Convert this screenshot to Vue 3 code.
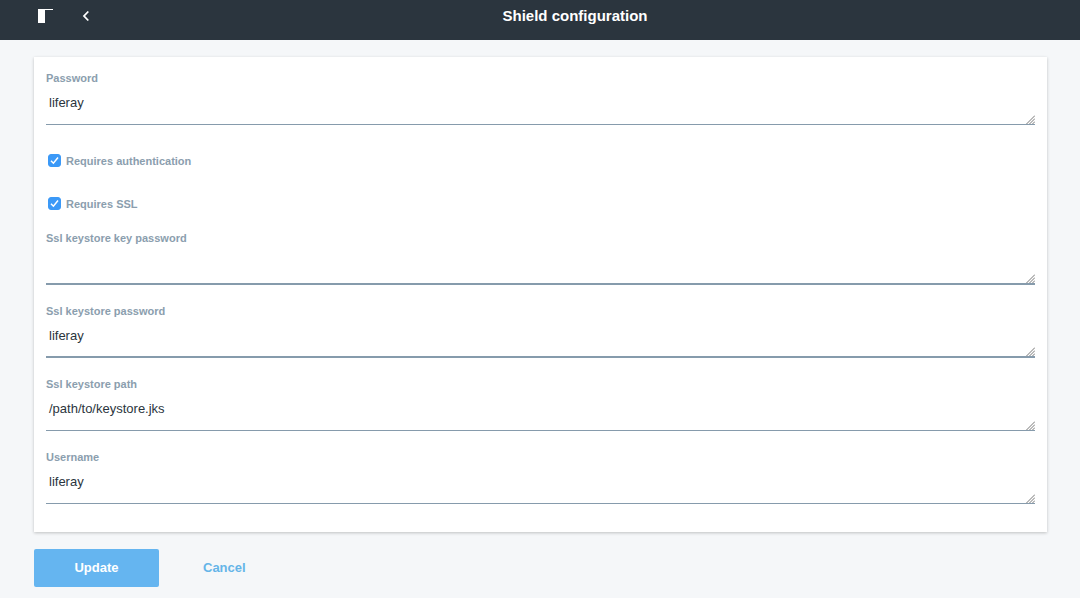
<script setup>
import { reactive } from 'vue'

const fields = reactive([
  { id: 'password', label: 'Password', value: 'liferay', strong: false },
  { id: 'requiresAuth', label: 'Requires authentication', value: true, check: true },
  { id: 'requiresSsl', label: 'Requires SSL', value: true, check: true },
  { id: 'keyPassword', label: 'Ssl keystore key password', value: '', strong: true },
  { id: 'storePassword', label: 'Ssl keystore password', value: 'liferay', strong: true },
  { id: 'storePath', label: 'Ssl keystore path', value: '/path/to/keystore.jks', strong: false },
  { id: 'username', label: 'Username', value: 'liferay', strong: false }
])
</script>

<template>
  <div class="page">
    <header class="bar">
      <div class="tools">
        <button class="tool" type="button" aria-label="Toggle menu">
          <svg width="16" height="16" viewBox="0 0 16 16">
            <rect x="0" y="1" width="7" height="14" fill="#fff" />
            <rect x="7" y="1" width="8" height="1" fill="#fff" />
          </svg>
        </button>
        <a class="tool" href="#" aria-label="Back">
          <svg width="8" height="12" viewBox="0 0 8 12">
            <path d="M6.3 1.5 L2 6 L6.3 10.5" fill="none" stroke="#fff" stroke-width="1.8" />
          </svg>
        </a>
      </div>
      <h1 class="title">Shield configuration</h1>
    </header>

    <form class="form" @submit.prevent>
      <div class="card">
        <template v-for="f in fields" :key="f.id">
          <label v-if="f.check" class="check">
            <span class="tick">
              <input v-model="f.value" type="checkbox" class="box" />
              <svg class="mark" viewBox="0 0 13 13">
                <path d="M3 6.8 L5.4 9.2 L10 3.6" fill="none" stroke="#fff" stroke-width="1.5" />
              </svg>
            </span>
            {{ f.label }}
          </label>
          <div v-else class="field">
            <label class="label" :for="f.id">{{ f.label }}</label>
            <div class="area">
              <textarea :id="f.id" v-model="f.value" class="text" :class="{ strong: f.strong }" rows="1"></textarea>
              <svg class="grip" :class="{ raised: f.strong }" viewBox="0 0 9 9" aria-hidden="true">
                <path d="M0.5 9 L9 0.5 M3.5 9 L9 3.5 M6.5 9 L9 6.5" fill="none" stroke="#666" stroke-width="0.9" />
              </svg>
            </div>
          </div>
        </template>
      </div>
      <div class="actions">
        <button class="btn primary" type="submit">Update</button>
        <button class="btn link" type="button">Cancel</button>
      </div>
    </form>
  </div>
</template>

<style>
body {
  background: #f5f7f9;
}
</style>

<style scoped>
.page {
  font-family: "Liberation Sans", Arial, sans-serif;
  color: #2b353d;
}
.bar {
  display: grid;
  grid-template-columns: 1fr auto 1fr;
  height: 40px;
  padding-left: 38px;
  box-sizing: border-box;
  background: #2b353e;
  color: #fff;
}
.tools {
  display: flex;
  align-items: center;
  gap: 28px;
  height: 32px;
}
.tool {
  display: flex;
  padding: 0;
  border: 0;
  background: none;
}
.title {
  margin: 0;
  padding-left: 32px;
  font-size: 15px;
  line-height: 32px;
  font-weight: 700;
}
.form {
  padding: 17px 33px 0 34px;
}
.card {
  padding: 13px 12px 28px;
  background: #fff;
  box-shadow: 0 1px 3px rgba(0, 0, 0, 0.22);
}
.label,
.check {
  font-size: 11px;
  line-height: 16px;
  font-weight: 700;
  color: #8b9eae;
}
.label {
  display: block;
}
.field + .field {
  margin-top: 18px;
}
.field + .check {
  margin-top: 14px;
}
.check + .field {
  margin-top: 5px;
}
.check {
  display: flex;
  align-items: center;
  gap: 5px;
  height: 43px;
  padding-left: 2px;
}
.tick {
  position: relative;
  display: flex;
  width: 13px;
  height: 13px;
}
.box {
  appearance: none;
  width: 13px;
  height: 13px;
  margin: 0;
  border: 1px solid #8b9eae;
  border-radius: 3px;
}
.box:checked {
  border-color: #3b99f7;
  background: #3b99f7;
}
.mark {
  position: absolute;
  inset: 0;
  pointer-events: none;
}
.area {
  position: relative;
}
.text {
  display: block;
  width: 100%;
  height: 39px;
  box-sizing: border-box;
  padding: 9px 3px 0;
  border: 0;
  border-bottom: 1px solid #869bac;
  outline: 0;
  resize: none;
  overflow: hidden;
  background: transparent;
  color: #2b353d;
  font: 13px/16px "Liberation Sans", Arial, sans-serif;
}
.text.strong {
  border-bottom-width: 2px;
}
.grip {
  position: absolute;
  right: 0;
  bottom: 1px;
  width: 9px;
  height: 9px;
  pointer-events: none;
}
.grip.raised {
  bottom: 2px;
}
.actions {
  display: flex;
  gap: 12px;
  padding: 17px 0 11px;
}
.btn {
  height: 38px;
  border: 0;
  border-radius: 2px;
  font: 700 13px/16px "Liberation Sans", Arial, sans-serif;
}
.primary {
  min-width: 125px;
  padding: 0 40px;
  background: #65b5f0;
  color: #fff;
}
.link {
  padding: 0 32px;
  background: none;
  color: #65b5e8;
}
</style>
